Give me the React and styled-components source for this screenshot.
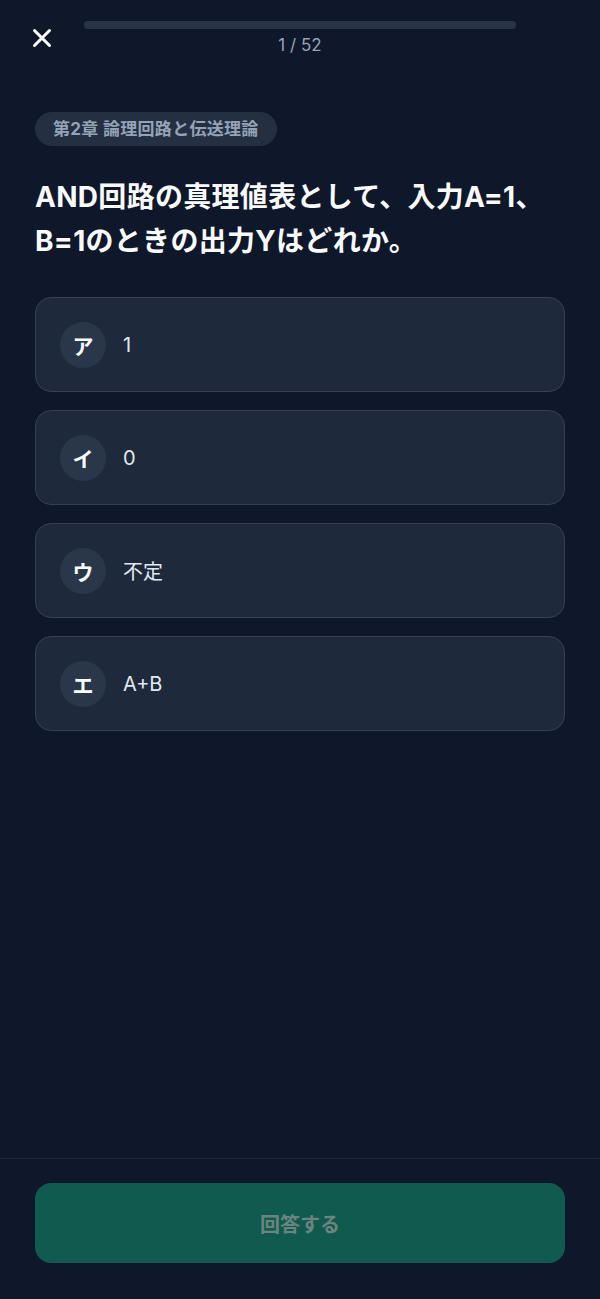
import React from "react";
import styled, { createGlobalStyle } from "styled-components";

const GlobalStyle = createGlobalStyle`
  html, body {
    margin: 0;
    padding: 0;
    background: #0f172a;
  }
  body {
    font-family: Inter, "Noto Sans CJK JP", sans-serif;
    color: #f1f5f9;
  }
  * { box-sizing: border-box; }
`;

const Page = styled.div`
  min-height: 100vh;
  display: flex;
  flex-direction: column;
  background: #0f172a;
`;

const Header = styled.header`
  display: grid;
  grid-template-columns: 20px 1fr 20px;
  column-gap: 32px;
  padding: 21px 32px 0;
`;

const CloseButton = styled.button`
  width: 20px;
  height: 20px;
  margin-top: 7px;
  padding: 0;
  border: none;
  background: none;
  display: flex;
  cursor: pointer;
`;

const Progress = styled.div`
  display: flex;
  flex-direction: column;
  align-items: center;
`;

const Track = styled.div`
  width: 100%;
  height: 8px;
  border-radius: 4px;
  background: #293446;
`;

const Counter = styled.div`
  margin-top: 6px;
  font-size: 17px;
  line-height: 20px;
  color: #94a3b8;
`;

const Main = styled.main`
  padding: 57px 35px 0;
`;

const Chapter = styled.span`
  display: inline-block;
  height: 34px;
  padding: 0 18px;
  border-radius: 17px;
  background: #243042;
  color: #94a3b8;
  font-size: 17px;
  font-weight: 700;
  line-height: 34px;
  letter-spacing: 0.3px;
`;

const Question = styled.h1`
  margin: 29px 0 0;
  font-size: 28px;
  font-weight: 700;
  line-height: 44px;
  letter-spacing: 0.3px;
  color: #f8fafc;
`;

const Choices = styled.div`
  margin-top: 34px;
  display: flex;
  flex-direction: column;
  gap: 18px;
`;

const Choice = styled.button`
  display: flex;
  align-items: center;
  gap: 17px;
  width: 100%;
  height: 95px;
  padding: 0 24px;
  border: 1px solid #334155;
  border-radius: 16px;
  background: #1e293b;
  font-family: inherit;
  text-align: left;
  cursor: pointer;
`;

const Mark = styled.span`
  width: 46px;
  height: 46px;
  flex-shrink: 0;
  border-radius: 50%;
  background: #2a3649;
  display: flex;
  align-items: center;
  justify-content: center;
  font-size: 21px;
  font-weight: 700;
  color: #f8fafc;
`;

const ChoiceText = styled.span`
  font-size: 20px;
  color: #e2e8f0;
`;

const Footer = styled.footer`
  margin-top: auto;
  border-top: 1px solid #1e293b;
  padding: 24px 35px 36px;
`;

const Submit = styled.button`
  width: 100%;
  height: 80px;
  border: none;
  border-radius: 16px;
  background: #115a4f;
  color: #6b8480;
  font-family: inherit;
  font-size: 20px;
  font-weight: 700;
  cursor: not-allowed;
`;

const choices = [
  { mark: "ア", text: "1" },
  { mark: "イ", text: "0" },
  { mark: "ウ", text: "不定" },
  { mark: "エ", text: "A+B" },
];

function CloseIcon() {
  return (
    <svg width="20" height="20" viewBox="0 0 20 20" fill="none">
      <path
        d="M2.5 2.5L17.5 17.5M17.5 2.5L2.5 17.5"
        stroke="#ffffff"
        strokeWidth="3"
        strokeLinecap="round"
      />
    </svg>
  );
}

export default function App() {
  return (
    <Page>
      <GlobalStyle />
      <Header>
        <CloseButton aria-label="閉じる">
          <CloseIcon />
        </CloseButton>
        <Progress>
          <Track />
          <Counter>1 / 52</Counter>
        </Progress>
        <div />
      </Header>

      <Main>
        <Chapter>第2章 論理回路と伝送理論</Chapter>
        <Question>
          AND回路の真理値表として、入力A=1、
          <br />
          B=1のときの出力Yはどれか。
        </Question>
        <Choices>
          {choices.map((c) => (
            <Choice key={c.mark}>
              <Mark>{c.mark}</Mark>
              <ChoiceText>{c.text}</ChoiceText>
            </Choice>
          ))}
        </Choices>
      </Main>

      <Footer>
        <Submit disabled>回答する</Submit>
      </Footer>
    </Page>
  );
}
